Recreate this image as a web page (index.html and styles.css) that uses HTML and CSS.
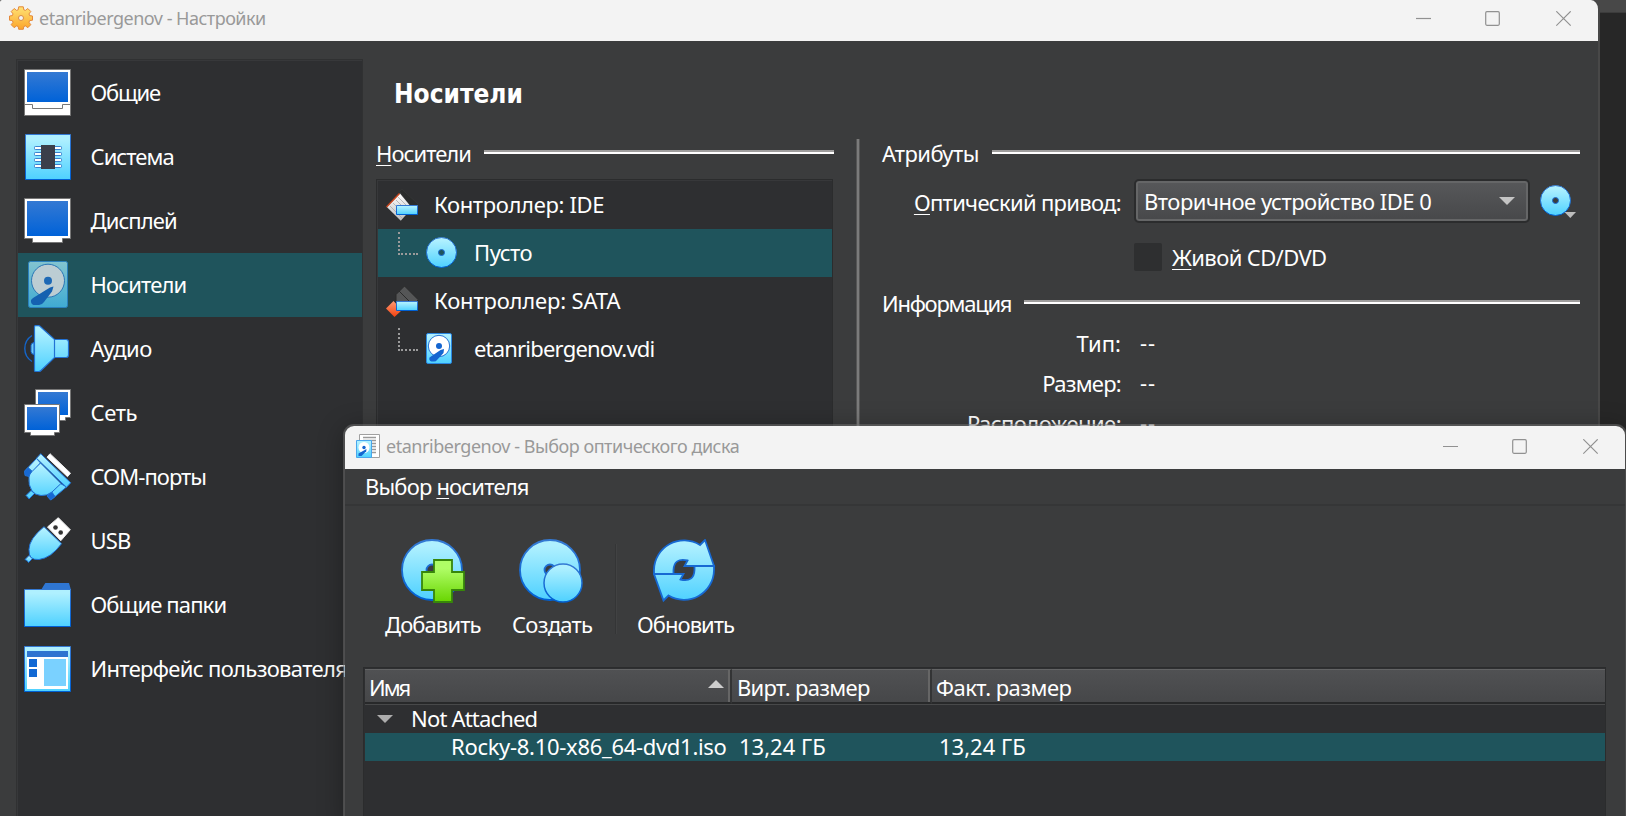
FILE: index.html
```
<!DOCTYPE html>
<html lang="ru">
<head>
<meta charset="utf-8">
<title>etanribergenov - Настройки</title>
<link rel="stylesheet" href="styles.css">
</head>
<body>
<svg class="defs" width="0" height="0" aria-hidden="true">
  <defs>
    <linearGradient id="cyan" x1="0" y1="0" x2="0" y2="1"><stop offset="0.1" stop-color="#aff0ff"/><stop offset="1" stop-color="#4ed1ff"/></linearGradient>
    <linearGradient id="blue" x1="0" y1="0" x2="0" y2="1"><stop offset="0" stop-color="#3479d3"/><stop offset="1" stop-color="#0062d8"/></linearGradient>
    <linearGradient id="edge" x1="0" y1="0" x2="0" y2="1"><stop offset="0" stop-color="#3479d3"/><stop offset="1" stop-color="#0060d4"/></linearGradient>
    <linearGradient id="muted" x1="0" y1="0" x2="0" y2="1"><stop offset="0" stop-color="#83c4d0"/><stop offset="1" stop-color="#3fabd3"/></linearGradient>
    <linearGradient id="green" x1="0" y1="0" x2="0" y2="1"><stop offset="0.2" stop-color="#affd66"/><stop offset="1" stop-color="#68d500"/></linearGradient>
    <linearGradient id="gold" x1="0" y1="0" x2="0" y2="1"><stop offset="0" stop-color="#ffe375"/><stop offset="1" stop-color="#fba42a"/></linearGradient>
    <linearGradient id="red" x1="0" y1="0" x2="0" y2="1"><stop offset="0" stop-color="#ff9a73"/><stop offset="1" stop-color="#f2410f"/></linearGradient>
    <linearGradient id="card" x1="0" y1="0" x2="0" y2="1"><stop offset="0" stop-color="#ffffff"/><stop offset="1" stop-color="#bdbdbd"/></linearGradient>
    <linearGradient id="turn" gradientUnits="userSpaceOnUse" x1="0" y1="0" x2="0" y2="62"><stop offset="0.1" stop-color="#aff0ff"/><stop offset="1" stop-color="#4ed1ff"/></linearGradient>
    <symbol id="disc" viewBox="0 0 32 32">
      <path fill="url(#cyan)" stroke="url(#edge)" fill-rule="evenodd" d="M15.5.5a15 15 0 1 0 0 30a15 15 0 1 0 0-30zM15.5 12.5a3 3 0 1 1 0 6a3 3 0 1 1 0-6z"/>
    </symbol>
  </defs>
</svg>

<section class="window settings">
  <header class="titlebar">
    <svg class="app-icon" width="24" height="24" viewBox="0 0 24 24"><path fill="url(#gold)" stroke="#e5893a" stroke-linejoin="round" d="M9.7.8h4.6l.5 3 1.7.6 2.3-1.9 3 3-1.8 2.4.6 1.7 2.9.4v4.2l-2.9.4-.6 1.7 1.8 2.4-3 3-2.3-1.8-1.7.6-.5 2.8H9.7l-.5-2.8-1.7-.6-2.3 1.8-3-3L4 16.300l-.6-1.700-2.900-.4V10l2.900-.4L4 7.900 2.200 5.500l3-3 2.300 1.900 1.700-.6z"/><circle cx="12" cy="12" r="2.500" fill="#f3f3f3" stroke="#d98c45"/></svg>
    <span class="caption caption-main">etanribergenov - Настройки</span>
    <div class="controls">
      <svg width="16" height="16" viewBox="0 0 16 16"><path d="M0 7.500h15"/></svg>
      <svg width="16" height="16" viewBox="0 0 16 16"><rect x=".7" y=".7" width="13.600" height="13.600" rx="1.200"/></svg>
      <svg width="16" height="16" viewBox="0 0 16 16"><path d="M.3.3l14.400 14.400M14.700.3L.3 14.700"/></svg>
    </div>
  </header>
  <div class="settings-body">
    <nav class="categories">
      <div class="category">
        <svg class="icon48" viewBox="0 0 48 48"><path fill="#fff" stroke="#777" d="M.5.5h46v46H.5z"/><path fill="url(#blue)" d="M3 3h41v30H3z"/><path fill="none" stroke="#777" d="M0 35.500h8.500v4h30v-4H47"/></svg>
        <span class="s-general">Общие</span>
      </div>
      <div class="category">
        <svg class="icon48" viewBox="0 0 48 48"><path fill="url(#cyan)" stroke="url(#edge)" d="M1.500 1.500h45v45h-45z"/><g fill="#fff" stroke="#3a83d0"><rect x="10.500" y="13.500" width="27" height="3" rx=".8"/><rect x="10.500" y="19.500" width="27" height="3" rx=".8"/><rect x="10.500" y="25.500" width="27" height="3" rx=".8"/><rect x="10.500" y="31.500" width="27" height="3" rx=".8"/></g><path fill="#3b3f4a" d="M17 12h14v24H17z"/></svg>
        <span class="s-system">Система</span>
      </div>
      <div class="category">
        <svg class="icon48" viewBox="0 0 48 48"><path fill="#fff" stroke="#777" d="M.5 1.500h46v40h-8v4h-30v-4h-8z"/><path fill="url(#blue)" d="M3 4h41v35H3z"/></svg>
        <span class="s-display">Дисплей</span>
      </div>
      <div class="category selected">
        <svg class="icon48" viewBox="0 0 48 48"><rect x="4.500" y=".5" width="39" height="46" rx="2" fill="url(#muted)" stroke="#2a80bd"/><circle cx="24" cy="19.700" r="16.500" fill="#bccdd3" stroke="#2a76b5"/><circle cx="24" cy="19.700" r="4" fill="#1d69b5"/><path fill="#1561b0" d="M29.500 25.500l-1.500 5-8 10.500q-2 3-5 3H9.500q-3-1-2.500-5l2-2 17-10.500z"/></svg>
        <span class="s-storage">Носители</span>
      </div>
      <div class="category">
        <svg class="icon48" viewBox="0 0 48 48"><path fill="none" stroke="#1465c9" stroke-width="1.400" d="M8 10.500Q.8 15 .8 23.500T8 36.500"/><path fill="#6fc9f5" stroke="#1465c9" d="M10 17.500q-3 .5-3 3v6q0 2.500 3 3z"/><path fill="url(#cyan)" stroke="#2272d4" stroke-width="1.200" d="M11.500.7h3q1 0 2 1L30.500 14.500H42q2.500 0 2.500 2.500v13q0 2.500-2.500 2.500H30.500L17 45.500q-1 1-2 1h-3.500q-1 0-1-1v-44q0-.8 1-.8zM30.500 14.500v18"/></svg>
        <span class="s-audio">Аудио</span>
      </div>
      <div class="category">
        <svg class="icon48" viewBox="0 0 48 48"><path fill="#fff" stroke="#777" d="M11.500.5h35v28h-5v3h-25v-3h-5z"/><path fill="url(#blue)" d="M14 3h30v23H14z"/><path fill="#fff" stroke="#777" d="M.5 15.500h35v28h-5v3h-24v-3h-6z"/><path fill="url(#blue)" d="M3 18h30v23H3z"/></svg>
        <span class="s-net">Сеть</span>
      </div>
      <div class="category">
        <svg class="icon48" viewBox="0 0 48 48"><path fill="#fff" stroke="#eee" stroke-linejoin="round" d="M26 .7l-3 3.500 20.500 19.500 3-3.500z"/><g stroke="#1f70d4" stroke-linejoin="round" fill="url(#cyan)"><path d="M12.500 5.500L.7 18l3.800 5 12-13zM42.500 34L27 47l-4-4 13.500-12.500z"/><path fill="#1769d3" d="M4 14.500L.5 18.500l.5 4 4 1L9 19zM27.500 38.500l-4.500 4.500 3.500 4 4.500-3.500z"/><path d="M2 42.500l5-5 3.500 3-5.500 5.500-1.500-2zM16.500 10L37 30.500 28 39q-5 4-11 3.500T8 38Q4 32 5 24q.5-3 3-5.500z"/><path d="M16.700.7l-4.200 4.600 30 29 4.200-4.500z"/></g></svg>
        <span class="s-com">COM-порты</span>
      </div>
      <div class="category">
        <svg class="icon48" viewBox="0 0 48 48"><path fill="#fff" stroke="#eee" d="M34.300.7l12 12-9.500 11L23.500 10z"/><circle cx="31.500" cy="10.500" r="2.300" fill="#333"/><circle cx="36.700" cy="15.500" r="2.300" fill="#333"/><g fill="url(#cyan)" stroke="#1f70d4"><path d="M1 42.500l4-4 3.500 3-4 4-1.500-2z"/><path d="M20 9.700l17.500 17Q27 41 15 42.500q-5 .5-8-2-2-2-2-8Q5 22 20 9.700z"/></g></svg>
        <span class="s-usb">USB</span>
      </div>
      <div class="category">
        <svg class="icon48" viewBox="0 0 48 48"><path fill="#2f76d2" d="M17 9l4.300-7H45l2 7z"/><path fill="url(#cyan)" stroke="url(#edge)" d="M.5 8.500h46v37H.5z"/></svg>
        <span class="s-folders">Общие папки</span>
      </div>
      <div class="category">
        <svg class="icon48" viewBox="0 0 48 48"><path fill="url(#cyan)" stroke="url(#edge)" d="M.5 1.500h46v45H.5z"/><path fill="#2f74d0" d="M3 6h41v6H3z"/><path fill="#fff" d="M3 12h41v32H3z"/><path fill="#1269d4" d="M5 14h8v8H5zM5 24h8v8H5z"/><path fill="#7ad1ff" d="M20 14h22v27H20z"/></svg>
        <span class="s-ui">Интерфейс пользователя</span>
      </div>
    </nav>
    <main class="page">
      <h1>Носители</h1>
      <div class="panes">
        <div class="pane-tree">
          <div class="group"><span class="g-media"><u>Н</u>осители</span><i class="rule"></i></div>
          <div class="tree">
            <div class="tree-row">
              <svg class="icon32" viewBox="0 0 32 32"><path fill="#2a2c2c" stroke="#3a3c3a" stroke-width=".6" d="M13.500 2.500L16 .3 32 15v2H24z"/><path fill="url(#card)" d="M14 4.500L.8 18l14 13.800L26 19z"/><path stroke="#aaa" stroke-width=".8" d="M4 17l12 12M7 14l12 12M10 11l12 12M12 8l12 12"/><path stroke="#cc461d" stroke-width="1.400" d="M13.500 4.500L.5 18"/><path fill="url(#cyan)" stroke="url(#edge)" d="M10.500 16.500h21v9h-21z"/></svg>
              <span class="s-ide">Контроллер: IDE</span>
            </div>
            <div class="tree-row child selected"><i class="branch"></i><svg class="icon32"><use href="#disc"/></svg><span class="s-empty">Пусто</span></div>
            <div class="tree-row">
              <svg class="icon32" viewBox="0 0 32 32"><path fill="#555657" stroke="#2b2b2b" d="M10 9.500L18.500 1 32 14.500 31 17H10z"/><path stroke="#2b2b2b" d="M13 6l12 12"/><path fill="url(#red)" d="M7.500 16L0 23.500 8.500 32l7.500-7z"/><path fill="url(#cyan)" stroke="url(#edge)" d="M10.500 16.500h21v9h-21z"/></svg>
              <span class="s-sata">Контроллер: SATA</span>
            </div>
            <div class="tree-row child"><i class="branch"></i><svg class="icon32" viewBox="0 0 32 32"><rect x=".5" y=".5" width="25" height="30" rx="1.500" fill="url(#cyan)" stroke="#2b87e0"/><circle cx="13" cy="13" r="10.700" fill="#fff" stroke="#2272d4"/><circle cx="13" cy="13" r="3" fill="#1465d0"/><path fill="#1465d0" d="M18 16l-.5 4-6.500 7q-1 1.500-3 1.500H5.500q-3-1-2-4L14.500 17z"/></svg><span class="s-vdi">etanribergenov.vdi</span></div>
          </div>
        </div>
        <div class="splitter"></div>
        <div class="pane-attrs">
          <div class="group"><span class="g-attr">Атрибуты</span><i class="rule"></i></div>
          <div class="form-row drive">
            <label class="s-drive"><u>О</u>птический привод:</label>
            <div class="combo"><span class="s-combo">Вторичное устройство IDE 0</span><svg width="16" height="8" viewBox="0 0 16 8"><path fill="#c4c4c4" d="M0 0h16L8 8z"/></svg></div>
            <svg class="disc-button" width="36" height="34" viewBox="0 0 36 34"><use href="#disc" width="32" height="32"/><path fill="#bdbdbd" d="M24.500 27h11.500l-5.700 6z"/></svg>
          </div>
          <div class="form-row live"><i class="checkbox"></i><span class="s-live"><u>Ж</u>ивой CD/DVD</span></div>
          <div class="group info"><span class="g-info">Информация</span><i class="rule"></i></div>
          <div class="form-row fact first"><label>Тип:</label><span>--</span></div>
          <div class="form-row fact"><label class="s-size">Размер:</label><span>--</span></div>
          <div class="form-row fact"><label class="s-loc">Расположение:</label><span>--</span></div>
        </div>
      </div>
    </main>
  </div>
</section>

<section class="window chooser">
  <header class="titlebar">
    <svg class="app-icon" width="24" height="24" viewBox="0 0 24 24"><path fill="#fff" stroke="#a0a0a0" d="M3.500.5h20v23h-20z"/><path stroke="#9a9a9a" stroke-width="1.500" d="M7 3.500h13M7 6.500h13M15 9.500h5M15 12.500h5M15 15.500h5M15 18.500h5"/><path fill="url(#cyan)" stroke="#4aa6ec" d="M.5 6.500h15v17H.5z"/><circle cx="8" cy="13.500" r="5.500" fill="#fff"/><circle cx="8" cy="13.500" r="1.700" fill="#1465d0"/><path fill="#1465d0" d="M10.500 15l-.3 2.300L5.500 22H2.500v-2.500z"/></svg>
    <span class="caption caption-chooser">etanribergenov - Выбор оптического диска</span>
    <div class="controls">
      <svg width="16" height="16" viewBox="0 0 16 16"><path d="M0 7.500h15"/></svg>
      <svg width="16" height="16" viewBox="0 0 16 16"><rect x=".7" y=".7" width="13.600" height="13.600" rx="1.200"/></svg>
      <svg width="16" height="16" viewBox="0 0 16 16"><path d="M.3.3l14.400 14.400M14.700.3L.3 14.700"/></svg>
    </div>
  </header>
  <div class="menubar"><span class="s-menu">Выбор <u>н</u>осителя</span></div>
  <div class="toolbar">
    <button class="tool tool-add">
      <svg width="66" height="66" viewBox="0 0 66 66"><path fill="url(#cyan)" stroke="url(#edge)" stroke-width="1.800" fill-rule="evenodd" d="M31 1a30 30 0 1 0 0 60a30 30 0 1 0 0-60zM31 25.500a5.500 5.500 0 1 1 0 11a5.500 5.500 0 1 1 0-11z"/><path fill="url(#green)" stroke="#37860a" stroke-width="1.800" d="M33 21h18v12h12v18H51v12H33V51H21V33h12z"/></svg>
      <span class="s-add">Добавить</span>
    </button>
    <button class="tool tool-create">
      <svg width="66" height="66" viewBox="0 0 66 66"><path fill="url(#cyan)" stroke="url(#edge)" stroke-width="1.800" fill-rule="evenodd" d="M31 1a30 30 0 1 0 0 60a30 30 0 1 0 0-60zM31 25.500a5.500 5.500 0 1 1 0 11a5.500 5.500 0 1 1 0-11z"/><circle cx="44" cy="44" r="19" fill="url(#cyan)" stroke="url(#edge)" stroke-width="1.500"/></svg>
      <span class="s-create">Создать</span>
    </button>
    <i class="tool-sep"></i>
    <button class="tool tool-refresh">
      <svg width="66" height="66" viewBox="0 0 66 66"><g fill="url(#turn)" stroke="#1769d3" stroke-width="1.800"><path d="M1 35V31A30 30 0 0 1 47 6L52 1 61 27H31.500l3-5.500Q21 18.500 20.500 31v4z"/><path d="M61 27v4A30 30 0 0 1 15.500 56.500L10.500 61.500 1 35h29.500l-3 5.500Q41 43.500 41.500 31v-4z"/></g></svg>
      <span class="s-refresh">Обновить</span>
    </button>
  </div>
  <div class="table">
    <div class="thead">
      <div class="th c1"><span class="s-name">Имя</span><svg width="16" height="8" viewBox="0 0 16 8"><path fill="#cdcdcd" d="M0 8h16L8 0z"/></svg></div>
      <div class="th c2"><span class="s-virt">Вирт. размер</span></div>
      <div class="th c3"><span class="s-fact">Факт. размер</span></div>
    </div>
    <div class="tr parent"><svg width="16" height="8" viewBox="0 0 16 8"><path fill="#adadad" d="M0 0h16L8 8z"/></svg><span class="s-na">Not Attached</span></div>
    <div class="tr selected">
      <div class="td d1"><span class="s-iso">Rocky-8.10-x86_64-dvd1.iso</span></div>
      <div class="td d2"><span>13,24 ГБ</span></div>
      <div class="td"><span>13,24 ГБ</span></div>
    </div>
  </div>
</section>
</body>
</html>
```
FILE: styles.css
```
* { box-sizing: border-box; }
body {
  margin: 0;
  width: 1626px;
  height: 816px;
  position: relative;
  overflow: hidden;
  background: linear-gradient(#484848 0 12px, #3c3c3c 12px 13px, #272727 13px);
  color: #fff;
  font: 22px/28px "Noto Sans", "DejaVu Sans", sans-serif;
  white-space: nowrap;
}
.defs { position: absolute; }
svg { display: block; flex: none; }
u { text-decoration-thickness: 1px; text-underline-offset: 3px; text-decoration-skip-ink: none; }

.window { position: absolute; background: #3b3c3d; overflow: hidden; }
.settings { left: 0; top: 0; width: 1600px; height: 830px; border-right: 2px solid #484848; border-radius: 2px 9px 0 0; }
.chooser { left: 343px; top: 424px; width: 1284px; height: 400px; border: 2px solid rgba(112, 112, 112, .5); background-clip: padding-box; border-radius: 11px 11px 0 0; box-shadow: 0 4px 26px rgba(0, 0, 0, .3); }

.titlebar { display: flex; align-items: center; height: 41px; padding: 0 26px 5px 9px; background: #f3f3f3; color: #999; font-size: 18px; }
.caption { margin-left: 6px; }
.caption-main { letter-spacing: -.5px; }
.caption-chooser { letter-spacing: -.46px; }
.controls { display: flex; margin: 2px 0 0 auto; }
.controls svg { fill: none; stroke: #919191; stroke-width: 1.200; }
.controls svg:nth-child(2) { margin: 0 55px 0 53px; }
.chooser .titlebar { height: 43px; padding: 0 26px 3px 11px; }

.settings-body { display: flex; padding: 18px 18px 0 16px; height: 790px; }
.categories { width: 347px; flex: none; padding: 1px 0 1px 1px; border: 1px solid #303132; background: #2e2f31; box-shadow: inset 1px 1px #37383a; }
.category { display: flex; align-items: center; height: 64px; padding-left: 6px; }
.category span { margin: 0 0 3px 18.5px; }
.icon48 { width: 48px; height: 48px; }
.icon32 { width: 32px; height: 32px; }
.selected { background: #1f545c; }

.page { flex: 1; padding: 18px 0 0 13px; }
h1 { margin: 0; padding-left: 18px; font: bold 26px/34px "DejaVu Sans Condensed", "DejaVu Sans", sans-serif; }
.panes { display: flex; margin-top: 26px; }
.group { display: flex; align-items: center; height: 30px; }
.group span { margin-top: 2px; }
.rule { flex: 1; height: 4px; margin-left: 13px; background: linear-gradient(#9f9d9d 50%, #fff 50%); }
.pane-tree { width: 458px; }
.tree { width: 457px; height: 420px; margin-top: 12px; padding: 1px 0 1px 1px; border: 1px solid #2b2c2d; background: #2e2f31; box-shadow: inset 1px 1px #37383a; }
.tree-row { display: flex; align-items: center; height: 48px; padding-left: 8px; }
.tree-row > span { margin: 0 0 2px 16px; }
.child { padding-left: 20px; }
.branch { width: 20px; height: 23px; margin: -20px 8px 0 0; border: dotted #9b9b9b; border-width: 0 0 2px 2px; }
.splitter { width: 4px; margin: 2px 22px 0; background: linear-gradient(90deg, #555 1px, #7b7b7b 1px 3px, #555 3px); }
.pane-attrs { flex: 1; }
.form-row { display: flex; align-items: center; }
.form-row label { width: 239px; text-align: right; flex: none; }
.drive { height: 44px; margin-top: 12px; }
.drive label { margin-top: 2px; }
.combo { display: flex; align-items: center; justify-content: space-between; width: 396px; height: 44px; margin-left: 13px; padding: 0 13px 0 8px; border: 2px solid #2b2c2d; border-radius: 5px; background: linear-gradient(#57585a, #47484a); box-shadow: inset 0 0 0 2px #656667; }
.disc-button { margin: 2px 0 0 10px; }
.live { height: 28px; margin: 20px 0 0 252px; }
.checkbox { width: 28px; height: 28px; margin-right: 10px; border-radius: 2px; background: #2e2f30; }
.info { margin-top: 16px; }
.fact { height: 40px; }
.first { margin-top: 6px; }
.fact span { margin: 0 0 3px 19px; letter-spacing: 1px; }

.menubar { height: 37px; padding: 3px 0 0 20px; border-bottom: 2px solid #353637; }
.toolbar { display: flex; align-items: flex-start; padding: 33px 0 0 40px; }
.tool { display: flex; flex-direction: column; align-items: flex-start; padding: 0; border: 0; background: none; color: inherit; font: inherit; }
.tool span { margin-top: 5px; }
.tool-add { width: 97px; }
.tool-add svg { margin-left: 16px; }
.tool-create { width: 81px; margin-left: 30px; }
.tool-create svg { margin-left: 7px; }
.tool-refresh { width: 99px; margin-left: 20px; }
.tool-refresh svg { margin-left: 16px; }
.tool-sep { width: 2px; height: 90px; margin: 5px 0 0 22px; background: linear-gradient(90deg, #343536 50%, #414243 50%); }
.table { width: 1243px; height: 160px; margin: 29px 0 0 18px; padding: 1px 0 0 1px; border: 1px solid #2b2c2d; background: #2e2f31; }
.thead { display: flex; height: 36px; border-bottom: 1px solid #48494a; }
.th { display: flex; align-items: center; justify-content: space-between; height: 35px; border-top: 1px solid #636465; border-bottom: 2px solid #28292a; background: linear-gradient(#505153, #464749); }
.th span { margin-top: 1px; }
.c1 { width: 367px; padding: 0 6px 0 4px; }
.c1 svg { margin-top: -4px; }
.c2 { width: 200px; padding-left: 5px; }
.c1, .c2 { border-right: 2px solid #333435; box-shadow: inset -2px 0 #666; }
.c3 { flex: 1; padding-left: 4px; }
.tr { display: flex; align-items: center; height: 28px; }
.tr span { display: block; margin-bottom: 2px; }
.parent { padding-left: 12px; }
.parent span { margin-left: 18px; }
.d1 { width: 374px; padding-left: 86px; }
.d2 { width: 200px; }

/* Per-label tracking */
.s-general { letter-spacing: -1.2px; }
.s-system { letter-spacing: -.95px; }
.s-display { letter-spacing: -.9px; }
.s-storage { letter-spacing: -.85px; }
.s-audio { letter-spacing: -.5px; }
.s-net { letter-spacing: -.4px; }
.s-com { letter-spacing: -.95px; }
.s-usb { letter-spacing: -.8px; }
.s-folders { letter-spacing: -.88px; }
.s-ui { letter-spacing: -.67px; }
.s-ide { letter-spacing: -.34px; }
.s-sata { letter-spacing: -.16px; }
.s-empty { letter-spacing: -.5px; }
.s-vdi { letter-spacing: -.8px; }
.g-media { letter-spacing: -.95px; }
.g-attr { letter-spacing: -.55px; }
.g-info { letter-spacing: -1.25px; }
.s-drive { letter-spacing: -.69px; }
.s-combo { letter-spacing: -.48px; }
.s-live { letter-spacing: -.6px; }
.s-size { letter-spacing: -.74px; }
.s-loc { letter-spacing: -.56px; }
.s-menu { letter-spacing: -.82px; }
.s-add { letter-spacing: -.9px; }
.s-create { letter-spacing: -.75px; }
.s-refresh { letter-spacing: -.95px; }
.s-name { letter-spacing: -2px; }
.s-virt { letter-spacing: -.68px; }
.s-fact { letter-spacing: -.52px; }
.s-na { letter-spacing: -.82px; }
.s-iso { letter-spacing: -.3px; }
```
